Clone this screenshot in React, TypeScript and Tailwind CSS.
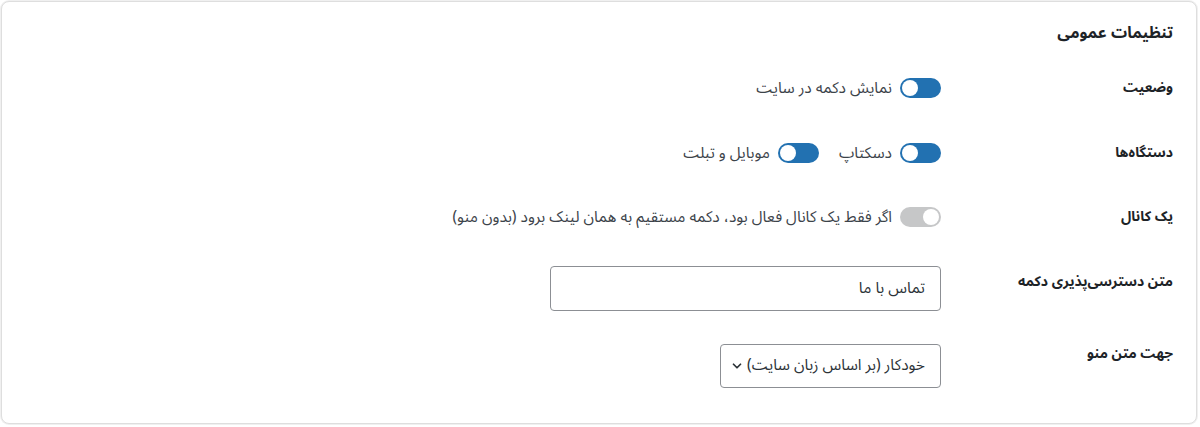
import { ChevronDown } from "lucide-react";

type ToggleProps = { on?: boolean; disabled?: boolean };

function Toggle({ on = false, disabled = false }: ToggleProps) {
  return (
    <span
      className={`flex h-[20px] w-[41px] shrink-0 items-center rounded-full px-[2px] ${
        disabled ? "bg-[#c6c7c8]" : on ? "bg-[#2271b1]" : "bg-[#c6c7c8]"
      } ${on ? "justify-end" : "justify-start"}`}
    >
      <span className="h-[16px] w-[16px] rounded-full bg-white" />
    </span>
  );
}

function Option({ label, on, disabled }: { label: string; on?: boolean; disabled?: boolean }) {
  return (
    <label className="flex items-center gap-[8px] text-[15.5px] leading-[20px] text-[#3c434a]">
      <Toggle on={on} disabled={disabled} />
      <span>{label}</span>
    </label>
  );
}

function Row({ label, labelPad = "pt-0", className = "", children }: {
  label: string;
  labelPad?: string;
  className?: string;
  children: React.ReactNode;
}) {
  return (
    <div className={`flex items-start ${className}`}>
      <div className={`w-[232px] shrink-0 text-[14px] font-bold leading-[20px] text-[#1d2327] ${labelPad}`}>
        {label}
      </div>
      <div className="flex flex-1 items-center">{children}</div>
    </div>
  );
}

export default function App() {
  return (
    <div className="h-[427px] w-[1200px] bg-white p-px" style={{ fontFamily: "'Noto Sans Arabic', 'DejaVu Sans', sans-serif" }}>
      <section
        dir="rtl"
        className="h-[423px] w-[1196px] rounded-[8px] border border-[#dedede] bg-white pr-[23px] pt-[19px] shadow-[0_0_0_1px_#f0f0f0]"
      >
        <h2 className="text-[16px] font-bold leading-[24px] text-[#1d2327]">تنظیمات عمومی</h2>

        <Row label="وضعیت" className="mt-[33px]">
          <Option label="نمایش دکمه در سایت" on />
        </Row>

        <Row label="دستگاه‌ها" className="mt-[45px]">
          <div className="flex items-center gap-[20px]">
            <Option label="دسکتاپ" on />
            <Option label="موبایل و تبلت" on />
          </div>
        </Row>

        <Row label="یک کانال" className="mt-[44px]">
          <Option label="اگر فقط یک کانال فعال بود، دکمه مستقیم به همان لینک برود (بدون منو)" disabled />
        </Row>

        <Row label="متن دسترسی‌پذیری دکمه" labelPad="pt-[6px]" className="mt-[39px]">
          <div className="flex h-[45px] w-[391px] items-center rounded-[4px] border border-[#8c8f94] px-[15px] text-[15.5px] text-[#2c3338]">
            تماس با ما
          </div>
        </Row>

        <Row label="جهت متن منو" className="mt-[33px]">
          <div className="flex h-[44px] w-[221px] items-center justify-between rounded-[4px] border border-[#8c8f94] pl-[9px] pr-[15px] text-[15.5px] text-[#2c3338]">
            <span>خودکار (بر اساس زبان سایت)</span>
            <ChevronDown className="h-[14px] w-[14px] text-[#2c3338]" strokeWidth={3} />
          </div>
        </Row>
      </section>
    </div>
  );
}
